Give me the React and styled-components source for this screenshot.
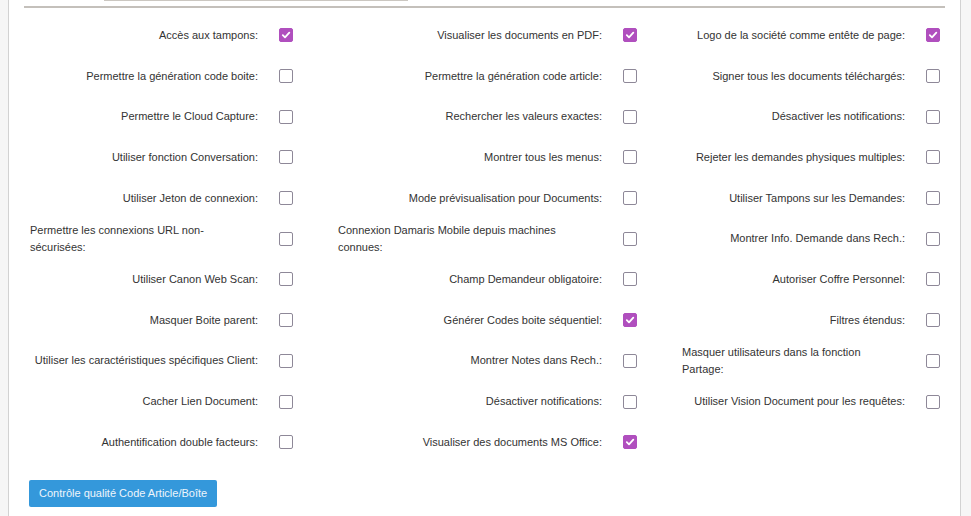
import React from "react";
import styled, { createGlobalStyle } from "styled-components";

const Global = createGlobalStyle`
  html, body { margin: 0; padding: 0; }
  body {
    background: #f6f6f6;
    font-family: "Liberation Sans", Arial, sans-serif;
    font-size: 11px;
    color: #333;
  }
`;

const Panel = styled.div`
  margin-left: 8px;
  width: 953px;
  min-height: 516px;
  box-sizing: border-box;
  background: #fff;
  border-left: 1px solid #d2d2d2;
  border-right: 1px solid #d2d2d2;
  padding: 0 15px;
  display: flex;
  flex-direction: column;
`;

const TabEdge = styled.div`
  margin-left: 80px;
  width: 304px;
  height: 1px;
  background: #cbc7c1;
`;

const Rule = styled.div`
  margin-top: 5px;
  height: 2px;
  background: #c4c0bb;
`;

const Grid = styled.div`
  margin-top: 7px;
  padding-left: 6px;
  display: grid;
  grid-template-columns: 228px 80px 264px 80px 223px 1fr;
  grid-auto-rows: 40.7px;
`;

const LabelCell = styled.div`
  display: flex;
  align-items: center;
  justify-content: flex-end;
  text-align: right;
`;

const LabelText = styled.span`
  display: inline-block;
  text-align: left;
  line-height: 17px;
`;

const CheckCell = styled.div`
  display: flex;
  align-items: center;
  padding-left: 21px;
`;

const Box = styled.span`
  width: 14px;
  height: 14px;
  box-sizing: border-box;
  border-radius: 2px;
  border: 1px solid ${(p) => (p.$checked ? "#b04fbe" : "#8e8898")};
  background: ${(p) => (p.$checked ? "#b04fbe" : "#fff")};
  display: flex;
  align-items: center;
  justify-content: center;
`;

const Footer = styled.div`
  margin-top: 17px;
  padding-left: 5px;
`;

const Button = styled.button`
  font-family: "Liberation Sans", Arial, sans-serif;
  font-size: 11px;
  color: #eef5fc;
  background: #3498db;
  border: none;
  border-radius: 2px;
  height: 27px;
  padding: 0 10px;
  cursor: pointer;
`;

const rows = [
  [["Accès aux tampons:", true], ["Visualiser les documents en PDF:", true], ["Logo de la société comme entête de page:", true]],
  [["Permettre la génération code boite:"], ["Permettre la génération code article:"], ["Signer tous les documents téléchargés:"]],
  [["Permettre le Cloud Capture:"], ["Rechercher les valeurs exactes:"], ["Désactiver les notifications:"]],
  [["Utiliser fonction Conversation:"], ["Montrer tous les menus:"], ["Rejeter les demandes physiques multiples:"]],
  [["Utiliser Jeton de connexion:"], ["Mode prévisualisation pour Documents:"], ["Utiliser Tampons sur les Demandes:"]],
  [["Permettre les connexions URL non-sécurisées:"], ["Connexion Damaris Mobile depuis machines connues:"], ["Montrer Info. Demande dans Rech.:"]],
  [["Utiliser Canon Web Scan:"], ["Champ Demandeur obligatoire:"], ["Autoriser Coffre Personnel:"]],
  [["Masquer Boite parent:"], ["Générer Codes boite séquentiel:", true], ["Filtres étendus:"]],
  [["Utiliser les caractéristiques spécifiques Client:"], ["Montrer Notes dans Rech.:"], ["Masquer utilisateurs dans la fonction Partage:"]],
  [["Cacher Lien Document:"], ["Désactiver notifications:"], ["Utiliser Vision Document pour les requêtes:"]],
  [["Authentification double facteurs:"], ["Visualiser des documents MS Office:", true], null],
];

function Check({ checked }) {
  return (
    <Box $checked={checked}>
      {checked && (
        <svg width="10" height="10" viewBox="0 0 10 10">
          <path d="M1.8 5.2 L4 7.3 L8.3 2.6" fill="none" stroke="#fff" strokeWidth="1.8" strokeLinecap="round" strokeLinejoin="round" />
        </svg>
      )}
    </Box>
  );
}

export default function App() {
  return (
    <>
      <Global />
      <Panel>
        <TabEdge />
        <Rule />
        <Grid>
          {rows.map((row, i) =>
            row.map((item, j) =>
              item ? (
                <React.Fragment key={`${i}-${j}`}>
                  <LabelCell>
                    <LabelText>{item[0]}</LabelText>
                  </LabelCell>
                  <CheckCell>
                    <Check checked={!!item[1]} />
                  </CheckCell>
                </React.Fragment>
              ) : (
                <React.Fragment key={`${i}-${j}`}>
                  <LabelCell />
                  <CheckCell />
                </React.Fragment>
              )
            )
          )}
        </Grid>
        <Footer>
          <Button>Contrôle qualité Code Article/Boîte</Button>
        </Footer>
      </Panel>
    </>
  );
}
